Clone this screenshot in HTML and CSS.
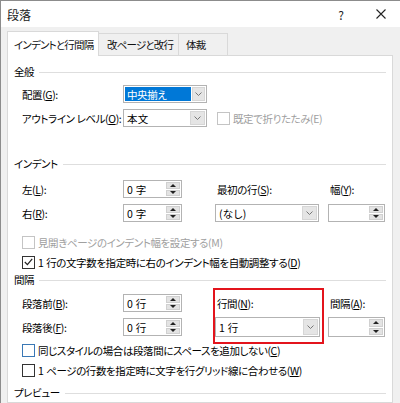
FILE: index.html
```html
<!DOCTYPE html>
<html lang="ja">
<head>
<meta charset="utf-8">
<title>段落</title>
<link rel="stylesheet" href="styles.css">
</head>
<body>
<div class="window">
  <div class="titlebar">
    <span class="title">段落</span>
    <span class="help">?</span>
    <span class="close"><svg width="10" height="10" viewBox="0 0 10 10"><path d="M0.5 0.5 L9.5 9.5 M9.5 0.5 L0.5 9.5" stroke="#222" stroke-width="1.1" fill="none"/></svg></span>
  </div>
  <div class="tabs">
    <div class="tab active">インデントと行間隔</div>
    <div class="tab">改ページと改行</div>
    <div class="tab">体裁</div>
  </div>
  <div class="panel">
    <div class="header">全般</div>
    <div class="grid general first">
      <span class="lbl">配置(<u>G</u>):</span>
      <div class="sel"><span class="val"><span class="hl">中央揃え</span></span><span class="btn"><svg width="7" height="4" viewBox="0 0 7 4"><path d="M0.5 0.5 L3.5 3.5 L6.5 0.5" stroke="#777" fill="none"/></svg></span></div>
    </div>
    <div class="grid general second">
      <span class="lbl">アウトライン レベル(<u>O</u>):</span>
      <div class="sel"><span class="val">本文</span><span class="btn"><svg width="7" height="4" viewBox="0 0 7 4"><path d="M0.5 0.5 L3.5 3.5 L6.5 0.5" stroke="#777" fill="none"/></svg></span></div>
      <span></span>
      <label class="chk disabled"><span class="box"></span>既定で折りたたみ(E)</label>
    </div>

    <div class="header indent-h">インデント</div>
    <div class="grid cols r-left">
      <span class="lbl">左(<u>L</u>):</span>
      <div class="spin"><span class="val">0 字</span><span class="btns"><span class="up"></span><span class="down"></span></span></div>
      <span></span>
      <span class="lbl2">最初の行(<u>S</u>):</span>
      <span></span>
      <span class="lbl2">幅(<u>Y</u>):</span>
    </div>
    <div class="grid cols r-right">
      <span class="lbl">右(<u>R</u>):</span>
      <div class="spin"><span class="val">0 字</span><span class="btns"><span class="up"></span><span class="down"></span></span></div>
      <span></span>
      <div class="sel wide"><span class="val">(なし)</span><span class="btn"><svg width="7" height="4" viewBox="0 0 7 4"><path d="M0.5 0.5 L3.5 3.5 L6.5 0.5" stroke="#777" fill="none"/></svg></span></div>
      <span></span>
      <div class="spin"><span class="val"></span><span class="btns"><span class="up"></span><span class="down"></span></span></div>
    </div>
    <label class="chk row disabled c-mirror"><span class="box"></span>見開きページのインデント幅を設定する(M)</label>
    <label class="chk row c-auto"><span class="box checked"><svg width="9" height="8" viewBox="0 0 9 8"><path d="M0.8 4 L3.4 6.6 L8.2 0.8" stroke="#222" stroke-width="1.2" fill="none"/></svg></span><span class="num">1 </span>行の文字数を指定時に右のインデント幅を自動調整する(<u>D</u>)</label>

    <div class="header space-h">間隔</div>
    <div class="grid cols r-before">
      <span class="lbl">段落前(<u>B</u>):</span>
      <div class="spin"><span class="val">0 行</span><span class="btns"><span class="up"></span><span class="down"></span></span></div>
      <span></span>
      <span class="lbl2">行間(<u>N</u>):</span>
      <span></span>
      <span class="lbl2">間隔(<u>A</u>):</span>
    </div>
    <div class="grid cols r-after">
      <span class="lbl">段落後(<u>F</u>):</span>
      <div class="spin"><span class="val">0 行</span><span class="btns"><span class="up"></span><span class="down"></span></span></div>
      <span></span>
      <div class="sel tall"><span class="val">1 行</span><span class="btn"><svg width="7" height="4" viewBox="0 0 7 4"><path d="M0.5 0.5 L3.5 3.5 L6.5 0.5" stroke="#777" fill="none"/></svg></span></div>
      <span></span>
      <div class="spin tall"><span class="val"></span><span class="btns"><span class="up"></span><span class="down"></span></span></div>
    </div>
    <label class="chk row c-same"><span class="box hover"></span>同じスタイルの場合は段落間にスペースを追加しない(<u>C</u>)</label>
    <label class="chk row c-grid"><span class="box"></span><span class="num">1 </span>ページの行数を指定時に文字を行グリッド線に合わせる(<u>W</u>)</label>

    <div class="header preview-h">プレビュー</div>

    <div class="highlight"></div>
  </div>
</div>
</body>
</html>
```
FILE: styles.css
```css
html, body {
  margin: 0;
  padding: 0;
  height: 403px;
  overflow: hidden;
}
body {
  font-family: "Noto Sans CJK JP", "Noto Sans", sans-serif;
  font-size: 10.5px;
  letter-spacing: -0.4px;
  font-feature-settings: "palt" 1;
  color: #000;
  background: #f0f0f0;
}
u { text-decoration: underline; text-underline-offset: 1px; }

.window {
  width: 400px;
  height: 403px;
  box-sizing: border-box;
  border-left: 1px solid #8c8c8c;
  border-top: 1px solid #8c8c8c;
  background: #f0f0f0;
  display: flex;
  flex-direction: column;
}

.titlebar {
  height: 26px;
  flex: none;
  background: #fff;
  display: flex;
  align-items: center;
  padding-left: 6px;
  padding-right: 9px;
}
.title { flex: 1; font-size: 12px; letter-spacing: 0; color: #222; }
.help {
  width: 20px;
  text-align: center;
  font-size: 12px;
  margin-right: 20px;
  color: #222;
}
.close {
  width: 20px;
  display: flex;
  justify-content: center;
}

.tabs {
  flex: none;
  height: 24px;
  margin-top: 4px;
  padding-left: 6px;
  display: flex;
  align-items: flex-end;
}
.tab {
  height: 22px;
  box-sizing: border-box;
  display: flex;
  align-items: center;
  border: 1px solid #d9d9d9;
  border-bottom: none;
  border-left: none;
  background: #f0f0f0;
  white-space: nowrap;
  color: #111;
  letter-spacing: -0.8px;
}
.tab.active {
  height: 25px;
  margin-bottom: -1px;
  position: relative;
  z-index: 1;
  background: #fff;
  border-left: 1px solid #d9d9d9;
  padding: 0 0 0 6px;
  width: 92px;
}
.tab:nth-child(2) { width: 80px; padding-left: 8px; }
.tab:nth-child(3) { width: 49px; padding-left: 7px; }

.panel {
  position: relative;
  flex: 1;
  margin-left: 6px;
  width: 386px;
  box-sizing: border-box;
  background: #fff;
  border: 1px solid #d9d9d9;
  padding-left: 6px;
  padding-right: 6px;
}

.header {
  height: 16px;
  line-height: 16px;
  display: flex;
  align-items: center;
  white-space: nowrap;
}
.header::after {
  content: "";
  flex: 1;
  height: 1px;
  background: #dedede;
  margin-left: 5px;
}
.panel > .header:first-child { margin-top: 8px; }

.grid {
  display: grid;
  margin-left: 8px;
  align-items: center;
  height: 18px;
}
.general { grid-template-columns: 101px 84px 10px auto; }
.general.first { margin-top: 5px; }
.general.second { margin-top: 6px; }

.cols { grid-template-columns: 101px 59px 33px 105px 8px 57px; }

.indent-h { margin-top: 29px; }
.r-left { margin-top: 8px; }
.r-right { margin-top: 6px; }
.c-mirror { margin-top: 12px; }
.c-auto { margin-top: 4px; }
.space-h { margin-top: 2px; }
.r-before { margin-top: 6px; }
.r-after { margin-top: 5px; height: 20px; }
.c-same { margin-top: 5px; }
.c-grid { margin-top: 4px; }
.preview-h { margin-top: 7px; }

.lbl { white-space: nowrap; }
.lbl2 { white-space: nowrap; padding-left: 2px; }
.num { letter-spacing: 0; white-space: pre; }

.sel, .spin {
  height: 18px;
  box-sizing: border-box;
  border: 1px solid #b3b3b3;
  background: #fff;
  display: flex;
  align-items: stretch;
}
.sel.tall, .spin.tall { height: 20px; }
.sel .val, .spin .val {
  flex: 1;
  display: flex;
  align-items: center;
  padding-left: 3px;
  white-space: pre;
  letter-spacing: 0.3px;
}
.sel .btn {
  width: 15px;
  margin: 1px;
  background: #e5e5e5;
  border: 1px solid #d6d6d6;
  box-sizing: border-box;
  display: flex;
  align-items: center;
  justify-content: center;
}
.sel.wide { width: 104px; }
.sel.tall { width: 105px; }
.hl {
  display: flex;
  align-items: center;
  height: 100%;
  box-sizing: border-box;
  width: 66px;
  padding-left: 2px;
  background: #0078d7;
  color: #fff;
  letter-spacing: -0.4px;
}
.sel .val:has(.hl) { padding: 1px 0 1px 1px; }

.spin .btns {
  width: 14px;
  margin: 1px 1px 1px 0;
  display: flex;
  flex-direction: column;
  gap: 1px;
}
.spin .btns span {
  flex: 1;
  background: #e3e3e3;
  border: 1px solid #d0d0d0;
  display: flex;
  align-items: center;
  justify-content: center;
}
.spin .btns .up::before {
  content: "";
  border-left: 3px solid transparent;
  border-right: 3px solid transparent;
  border-bottom: 3px solid #222;
}
.spin .btns .down::before {
  content: "";
  border-left: 3px solid transparent;
  border-right: 3px solid transparent;
  border-top: 3px solid #222;
}

.chk {
  display: flex;
  align-items: center;
  white-space: nowrap;
}
.chk.row {
  margin-left: 8px;
  height: 16px;
}
.chk .box {
  width: 13px;
  height: 13px;
  box-sizing: border-box;
  border: 1px solid #333;
  background: #fff;
  margin-right: 3px;
  flex: none;
  display: flex;
  align-items: center;
  justify-content: center;
}
.chk .box.hover { border-color: #3a78b5; }
.chk.disabled { color: #a0a0a0; }
.chk.disabled .box { border-color: #c4c4c4; }

.highlight {
  position: absolute;
  left: 205px;
  top: 232px;
  width: 111px;
  height: 56px;
  box-sizing: border-box;
  border: 2px solid #e3141c;
  pointer-events: none;
}
```
